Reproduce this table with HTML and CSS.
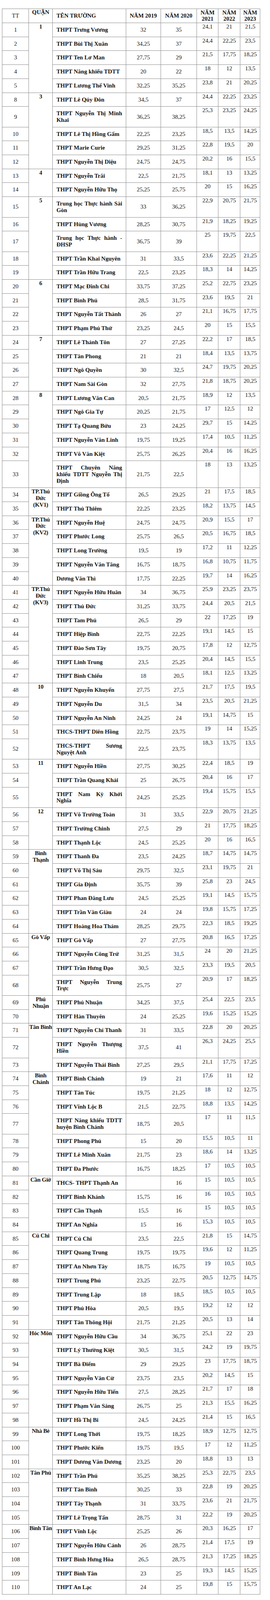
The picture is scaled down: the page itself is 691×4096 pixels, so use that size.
FILE: index.html
```html
<!DOCTYPE html>
<html lang="vi">
<head>
<meta charset="utf-8">
<title>Điểm chuẩn lớp 10</title>
<link rel="stylesheet" href="styles.css">
</head>
<body>
<table class="scores">
<colgroup>
<col class="c-tt"><col class="c-q"><col class="c-n"><col class="c-y1"><col class="c-y2"><col class="c-t1"><col class="c-t2"><col class="c-t3">
</colgroup>
<thead>
<tr><th class="h-tt">TT</th><th class="h-q">QUẬN</th><th class="h-n">TÊN TRƯỜNG</th><th class="h-y">NĂM 2019</th><th class="h-y">NĂM 2020</th><th class="h-y">NĂM<br>2021</th><th class="h-y">NĂM<br>2022</th><th class="h-y">NĂM<br>2023</th></tr>
</thead>
<tbody>
<tr><td class="tt">1</td><td class="q" rowspan="5">1</td><td class="n">THPT Trưng Vương</td><td class="y">32</td><td class="y">35</td><td class="t">24,1</td><td class="t">21</td><td class="t">21,5</td></tr>
<tr><td class="tt">2</td><td class="n">THPT Bùi Thị Xuân</td><td class="y">34,25</td><td class="y">37</td><td class="t">24,4</td><td class="t">22,25</td><td class="t">23,5</td></tr>
<tr><td class="tt">3</td><td class="n">THPT Ten Lơ Man</td><td class="y">27,75</td><td class="y">29</td><td class="t">21,5</td><td class="t">17,75</td><td class="t">18,25</td></tr>
<tr><td class="tt">4</td><td class="n">THPT Năng khiếu TDTT</td><td class="y">20</td><td class="y">22</td><td class="t">18</td><td class="t">12</td><td class="t">13,5</td></tr>
<tr><td class="tt">5</td><td class="n">THPT Lương Thế Vinh</td><td class="y">32,25</td><td class="y">35,25</td><td class="t">23,8</td><td class="t">21</td><td class="t">20,25</td></tr>
<tr><td class="tt">8</td><td class="q" rowspan="5">3</td><td class="n">THPT Lê Qúy Đôn</td><td class="y">34,5</td><td class="y">37</td><td class="t">24,4</td><td class="t">22,25</td><td class="t">23,25</td></tr>
<tr><td class="tt">9</td><td class="n">THPT Nguyễn Thị Minh Khai</td><td class="y">36,25</td><td class="y">38,25</td><td class="t">25,3</td><td class="t">23,25</td><td class="t">24,25</td></tr>
<tr><td class="tt">10</td><td class="n">THPT Lê Thị Hồng Gấm</td><td class="y">22,25</td><td class="y">23,25</td><td class="t">18,5</td><td class="t">13,5</td><td class="t">14,25</td></tr>
<tr><td class="tt">11</td><td class="n">THPT Marie Curie</td><td class="y">29,25</td><td class="y">31,25</td><td class="t">22,8</td><td class="t">19,5</td><td class="t">20</td></tr>
<tr><td class="tt">12</td><td class="n">THPT Nguyễn Thị Diệu</td><td class="y">24,75</td><td class="y">24,75</td><td class="t">20,2</td><td class="t">16</td><td class="t">15,5</td></tr>
<tr><td class="tt">13</td><td class="q" rowspan="2">4</td><td class="n">THPT Nguyễn Trãi</td><td class="y">22,5</td><td class="y">21,75</td><td class="t">18,1</td><td class="t">13</td><td class="t">13,25</td></tr>
<tr><td class="tt">14</td><td class="n">THPT Nguyễn Hữu Thọ</td><td class="y">25,25</td><td class="y">25,75</td><td class="t">20</td><td class="t">15</td><td class="t">16,25</td></tr>
<tr><td class="tt">15</td><td class="q" rowspan="5">5</td><td class="n">Trung học Thực hành Sài Gòn</td><td class="y">33</td><td class="y">36,25</td><td class="t">22,9</td><td class="t">20,75</td><td class="t">21,75</td></tr>
<tr><td class="tt">16</td><td class="n">THPT Hùng Vương</td><td class="y">28,25</td><td class="y">30,75</td><td class="t">21,9</td><td class="t">18,25</td><td class="t">19,25</td></tr>
<tr><td class="tt">17</td><td class="n">Trung học Thực hành - ĐHSP</td><td class="y">36,75</td><td class="y">39</td><td class="t">25</td><td class="t">19,75</td><td class="t">22,5</td></tr>
<tr><td class="tt">18</td><td class="n">THPT Trần Khai Nguyên</td><td class="y">31</td><td class="y">33,5</td><td class="t">23,6</td><td class="t">22,25</td><td class="t">21,25</td></tr>
<tr><td class="tt">19</td><td class="n">THPT Trần Hữu Trang</td><td class="y">22,5</td><td class="y">23,25</td><td class="t">18,3</td><td class="t">14</td><td class="t">14,25</td></tr>
<tr><td class="tt">20</td><td class="q" rowspan="4">6</td><td class="n">THPT Mạc Đĩnh Chi</td><td class="y">33,75</td><td class="y">37,25</td><td class="t">25,2</td><td class="t">22,75</td><td class="t">23,25</td></tr>
<tr><td class="tt">21</td><td class="n">THPT Bình Phú</td><td class="y">28,5</td><td class="y">31,75</td><td class="t">23,6</td><td class="t">19,5</td><td class="t">21</td></tr>
<tr><td class="tt">22</td><td class="n">THPT Nguyễn Tất Thành</td><td class="y">26</td><td class="y">27</td><td class="t">21,1</td><td class="t">16,75</td><td class="t">17,75</td></tr>
<tr><td class="tt">23</td><td class="n">THPT Phạm Phú Thứ</td><td class="y">23,25</td><td class="y">24,5</td><td class="t">20</td><td class="t">15</td><td class="t">15,5</td></tr>
<tr><td class="tt">24</td><td class="q" rowspan="4">7</td><td class="n">THPT Lê Thánh Tôn</td><td class="y">27</td><td class="y">27,25</td><td class="t">22,2</td><td class="t">17</td><td class="t">18,5</td></tr>
<tr><td class="tt">25</td><td class="n">THPT Tân Phong</td><td class="y">21</td><td class="y">21</td><td class="t">18,4</td><td class="t">13,5</td><td class="t">13,75</td></tr>
<tr><td class="tt">26</td><td class="n">THPT Ngô Quyền</td><td class="y">30</td><td class="y">32,5</td><td class="t">24,7</td><td class="t">19,75</td><td class="t">20,25</td></tr>
<tr><td class="tt">27</td><td class="n">THPT Nam Sài Gòn</td><td class="y">32</td><td class="y">27,75</td><td class="t">21,8</td><td class="t">18,75</td><td class="t">20,25</td></tr>
<tr><td class="tt">28</td><td class="q" rowspan="6">8</td><td class="n">THPT Lương Văn Can</td><td class="y">20,5</td><td class="y">21,75</td><td class="t">18,9</td><td class="t">12</td><td class="t">13,5</td></tr>
<tr><td class="tt">29</td><td class="n">THPT Ngô Gia Tự</td><td class="y">20,25</td><td class="y">21,75</td><td class="t">17</td><td class="t">12,5</td><td class="t">12</td></tr>
<tr><td class="tt">30</td><td class="n">THPT Tạ Quang Bửu</td><td class="y">23</td><td class="y">24,25</td><td class="t">29,7</td><td class="t">15</td><td class="t">14,25</td></tr>
<tr><td class="tt">31</td><td class="n">THPT Nguyễn Văn Linh</td><td class="y">19,75</td><td class="y">19,25</td><td class="t">17,4</td><td class="t">10,5</td><td class="t">11,25</td></tr>
<tr><td class="tt">32</td><td class="n">THPT Võ Văn Kiệt</td><td class="y">25,75</td><td class="y">26,25</td><td class="t">20,4</td><td class="t">16</td><td class="t">16,25</td></tr>
<tr><td class="tt">33</td><td class="n">THPT Chuyên Năng khiếu TDTT Nguyễn Thị Định</td><td class="y">21,75</td><td class="y">22,5</td><td class="t">18</td><td class="t">13</td><td class="t">13,25</td></tr>
<tr><td class="tt">34</td><td class="q" rowspan="2">TP.Thủ<br>Đức<br>(KV1)</td><td class="n">THPT Giồng Ông Tố</td><td class="y">26,5</td><td class="y">29,25</td><td class="t">21</td><td class="t">17,5</td><td class="t">18,5</td></tr>
<tr><td class="tt">35</td><td class="n">THPT Thủ Thiêm</td><td class="y">22,25</td><td class="y">23,25</td><td class="t">18,2</td><td class="t">13,75</td><td class="t">14,5</td></tr>
<tr><td class="tt">36</td><td class="q" rowspan="5">TP.Thủ<br>Đức<br>(KV2)</td><td class="n">THPT Nguyễn Huệ</td><td class="y">24,75</td><td class="y">24,75</td><td class="t">20,9</td><td class="t">15,5</td><td class="t">17</td></tr>
<tr><td class="tt">37</td><td class="n">THPT Phước Long</td><td class="y">25,75</td><td class="y">26,5</td><td class="t">20,5</td><td class="t">16,75</td><td class="t">18,5</td></tr>
<tr><td class="tt">38</td><td class="n">THPT Long Trường</td><td class="y">19,5</td><td class="y">19</td><td class="t">17,2</td><td class="t">11</td><td class="t">12,25</td></tr>
<tr><td class="tt">39</td><td class="n">THPT Nguyễn Văn Tăng</td><td class="y">16,75</td><td class="y">18,75</td><td class="t">16,8</td><td class="t">10,75</td><td class="t">11,75</td></tr>
<tr><td class="tt">40</td><td class="n">Dương Văn Thì</td><td class="y">17,75</td><td class="y">22,25</td><td class="t">19,7</td><td class="t">14</td><td class="t">16,25</td></tr>
<tr><td class="tt">41</td><td class="q" rowspan="7">TP.Thủ<br>Đức<br>(KV3)</td><td class="n">THPT Nguyễn Hữu Huân</td><td class="y">34</td><td class="y">36,75</td><td class="t">25,9</td><td class="t">23,25</td><td class="t">23,75</td></tr>
<tr><td class="tt">42</td><td class="n">THPT Thủ Đức</td><td class="y">31,25</td><td class="y">33,75</td><td class="t">24,4</td><td class="t">20,5</td><td class="t">21,5</td></tr>
<tr><td class="tt">43</td><td class="n">THPT Tam Phú</td><td class="y">26,5</td><td class="y">29</td><td class="t">22</td><td class="t">17,25</td><td class="t">19</td></tr>
<tr><td class="tt">44</td><td class="n">THPT Hiệp Bình</td><td class="y">22,75</td><td class="y">22,25</td><td class="t">19,1</td><td class="t">14,5</td><td class="t">15</td></tr>
<tr><td class="tt">45</td><td class="n">THPT Đào Sơn Tây</td><td class="y">19,75</td><td class="y">20,75</td><td class="t">17,8</td><td class="t">12</td><td class="t">12,75</td></tr>
<tr><td class="tt">46</td><td class="n">THPT Linh Trung</td><td class="y">23,5</td><td class="y">25,25</td><td class="t">20,4</td><td class="t">14,5</td><td class="t">15,5</td></tr>
<tr><td class="tt">47</td><td class="n">THPT Bình Chiểu</td><td class="y">18</td><td class="y">20,5</td><td class="t">18,1</td><td class="t">12,5</td><td class="t">13,25</td></tr>
<tr><td class="tt">48</td><td class="q" rowspan="5">10</td><td class="n">THPT Nguyễn Khuyến</td><td class="y">27,75</td><td class="y">27,5</td><td class="t">21,7</td><td class="t">17,5</td><td class="t">19,5</td></tr>
<tr><td class="tt">49</td><td class="n">THPT Nguyễn Du</td><td class="y">31,5</td><td class="y">34</td><td class="t">23,5</td><td class="t">20,5</td><td class="t">21,25</td></tr>
<tr><td class="tt">50</td><td class="n">THPT Nguyễn An Ninh</td><td class="y">24,25</td><td class="y">24</td><td class="t">19,1</td><td class="t">14,75</td><td class="t">15</td></tr>
<tr><td class="tt">51</td><td class="n">THCS-THPT Diên Hồng</td><td class="y">22,75</td><td class="y">23,75</td><td class="t">19</td><td class="t">14</td><td class="t">15,25</td></tr>
<tr><td class="tt">52</td><td class="n">THCS-THPT Sương Nguyệt Anh</td><td class="y">22,5</td><td class="y">23,75</td><td class="t">18,3</td><td class="t">13,75</td><td class="t">13,5</td></tr>
<tr><td class="tt">53</td><td class="q" rowspan="3">11</td><td class="n">THPT Nguyễn Hiền</td><td class="y">27,75</td><td class="y">30,25</td><td class="t">22,4</td><td class="t">18,5</td><td class="t">19</td></tr>
<tr><td class="tt">54</td><td class="n">THPT Trần Quang Khải</td><td class="y">25</td><td class="y">26,75</td><td class="t">20,4</td><td class="t">16</td><td class="t">17</td></tr>
<tr><td class="tt">55</td><td class="n">THPT Nam Kỳ Khởi Nghĩa</td><td class="y">24,25</td><td class="y">25,25</td><td class="t">19,4</td><td class="t">15,75</td><td class="t">15,5</td></tr>
<tr><td class="tt">56</td><td class="q" rowspan="3">12</td><td class="n">THPT Võ Trường Toản</td><td class="y">31</td><td class="y">33,5</td><td class="t">22,9</td><td class="t">20,75</td><td class="t">21,25</td></tr>
<tr><td class="tt">57</td><td class="n">THPT Trường Chinh</td><td class="y">27,5</td><td class="y">29</td><td class="t">21</td><td class="t">17,75</td><td class="t">18,25</td></tr>
<tr><td class="tt">58</td><td class="n">THPT Thạnh Lộc</td><td class="y">24,5</td><td class="y">25,25</td><td class="t">20</td><td class="t">16</td><td class="t">16,5</td></tr>
<tr><td class="tt">59</td><td class="q" rowspan="6">Bình<br>Thạnh</td><td class="n">THPT Thanh Đa</td><td class="y">23,5</td><td class="y">24,25</td><td class="t">18,7</td><td class="t">14,75</td><td class="t">14,75</td></tr>
<tr><td class="tt">60</td><td class="n">THPT Võ Thị Sáu</td><td class="y">29,75</td><td class="y">32,5</td><td class="t">23,1</td><td class="t">19,75</td><td class="t">21</td></tr>
<tr><td class="tt">61</td><td class="n">THPT Gia Định</td><td class="y">35,75</td><td class="y">39</td><td class="t">25,8</td><td class="t">23</td><td class="t">24,5</td></tr>
<tr><td class="tt">62</td><td class="n">THPT Phan Đăng Lưu</td><td class="y">24,5</td><td class="y">25,25</td><td class="t">19,1</td><td class="t">14,5</td><td class="t">15,75</td></tr>
<tr><td class="tt">63</td><td class="n">THPT Trần Văn Giàu</td><td class="y">24</td><td class="y">24</td><td class="t">19,8</td><td class="t">15,75</td><td class="t">17,25</td></tr>
<tr><td class="tt">64</td><td class="n">THPT Hoàng Hoa Thám</td><td class="y">28,25</td><td class="y">29,75</td><td class="t">22,3</td><td class="t">18,5</td><td class="t">19,25</td></tr>
<tr><td class="tt">65</td><td class="q" rowspan="4">Gò Vấp</td><td class="n">THPT Gò Vấp</td><td class="y">27</td><td class="y">27,75</td><td class="t">20,8</td><td class="t">16,5</td><td class="t">17,25</td></tr>
<tr><td class="tt">66</td><td class="n">THPT Nguyễn Công Trứ</td><td class="y">31,25</td><td class="y">31,5</td><td class="t">24</td><td class="t">20</td><td class="t">21,25</td></tr>
<tr><td class="tt">67</td><td class="n">THPT Trần Hưng Đạo</td><td class="y">30,5</td><td class="y">32,5</td><td class="t">23,3</td><td class="t">19,5</td><td class="t">20,5</td></tr>
<tr><td class="tt">68</td><td class="n">THPT Nguyễn Trung Trực</td><td class="y">25,75</td><td class="y">27</td><td class="t">20,9</td><td class="t">17</td><td class="t">18,25</td></tr>
<tr><td class="tt">69</td><td class="q" rowspan="2">Phú<br>Nhuận</td><td class="n">THPT Phú Nhuận</td><td class="y">34,25</td><td class="y">37,5</td><td class="t">25,4</td><td class="t">22,5</td><td class="t">23,5</td></tr>
<tr><td class="tt">70</td><td class="n">THPT Hàn Thuyên</td><td class="y">24</td><td class="y">25,25</td><td class="t">19,6</td><td class="t">15,25</td><td class="t">15,25</td></tr>
<tr><td class="tt">71</td><td class="q" rowspan="3">Tân Bình</td><td class="n">THPT Nguyễn Chí Thanh</td><td class="y">31</td><td class="y">33,5</td><td class="t">22,8</td><td class="t">20</td><td class="t">20,25</td></tr>
<tr><td class="tt">72</td><td class="n">THPT Nguyễn Thượng Hiền</td><td class="y">37,5</td><td class="y">41</td><td class="t">26,3</td><td class="t">24,25</td><td class="t">25,5</td></tr>
<tr><td class="tt">73</td><td class="n">THPT Nguyễn Thái Bình</td><td class="y">27,25</td><td class="y">29,5</td><td class="t">21,1</td><td class="t">17,75</td><td class="t">17,25</td></tr>
<tr><td class="tt">74</td><td class="q" rowspan="7">Bình<br>Chánh</td><td class="n">THPT Bình Chánh</td><td class="y">19</td><td class="y">21</td><td class="t">17,6</td><td class="t">11</td><td class="t">12</td></tr>
<tr><td class="tt">75</td><td class="n">THPT Tân Túc</td><td class="y">19,75</td><td class="y">21,25</td><td class="t">18</td><td class="t">12</td><td class="t">12,75</td></tr>
<tr><td class="tt">76</td><td class="n">THPT Vĩnh Lộc B</td><td class="y">21,5</td><td class="y">22,75</td><td class="t">18,8</td><td class="t">13,5</td><td class="t">14,25</td></tr>
<tr><td class="tt">77</td><td class="n">THPT Năng khiếu TDTT huyện Bình Chánh</td><td class="y">18,75</td><td class="y">20,5</td><td class="t">17</td><td class="t">11</td><td class="t">11,5</td></tr>
<tr><td class="tt">78</td><td class="n">THPT Phong Phú</td><td class="y">15</td><td class="y">20</td><td class="t">15,5</td><td class="t">10,5</td><td class="t">11</td></tr>
<tr><td class="tt">79</td><td class="n">THPT Lê Minh Xuân</td><td class="y">21,75</td><td class="y">23</td><td class="t">18,6</td><td class="t">14</td><td class="t">13,25</td></tr>
<tr><td class="tt">80</td><td class="n">THPT Đa Phước</td><td class="y">16,75</td><td class="y">18,25</td><td class="t">17</td><td class="t">10,5</td><td class="t">10,5</td></tr>
<tr><td class="tt">81</td><td class="q" rowspan="4">Cần Giờ</td><td class="n">THCS- THPT Thạnh An</td><td class="y"></td><td class="y">16</td><td class="t">15</td><td class="t">10,5</td><td class="t">10,5</td></tr>
<tr><td class="tt">82</td><td class="n">THPT Bình Khánh</td><td class="y">15,75</td><td class="y">16</td><td class="t">16</td><td class="t">10,5</td><td class="t">10,5</td></tr>
<tr><td class="tt">83</td><td class="n">THPT Cần Thạnh</td><td class="y">15,5</td><td class="y">16</td><td class="t">15</td><td class="t">10,5</td><td class="t">10,5</td></tr>
<tr><td class="tt">84</td><td class="n">THPT An Nghĩa</td><td class="y">15</td><td class="y">16</td><td class="t">15,3</td><td class="t">10,5</td><td class="t">10,5</td></tr>
<tr><td class="tt">85</td><td class="q" rowspan="7">Củ Chi</td><td class="n">THPT Củ Chi</td><td class="y">23,5</td><td class="y">22,5</td><td class="t">21,8</td><td class="t">15</td><td class="t">14,75</td></tr>
<tr><td class="tt">86</td><td class="n">THPT Quang Trung</td><td class="y">19,75</td><td class="y">19,75</td><td class="t">19,6</td><td class="t">12</td><td class="t">11,25</td></tr>
<tr><td class="tt">87</td><td class="n">THPT An Nhơn Tây</td><td class="y">18,75</td><td class="y">16,75</td><td class="t">19</td><td class="t">10,5</td><td class="t">10,5</td></tr>
<tr><td class="tt">88</td><td class="n">THPT Trung Phú</td><td class="y">23,25</td><td class="y">22,75</td><td class="t">20,5</td><td class="t">12,75</td><td class="t">14,75</td></tr>
<tr><td class="tt">89</td><td class="n">THPT Trung Lập</td><td class="y">18</td><td class="y">18,5</td><td class="t">18,5</td><td class="t">10,5</td><td class="t">10,5</td></tr>
<tr><td class="tt">90</td><td class="n">THPT Phú Hòa</td><td class="y">20,5</td><td class="y">19,5</td><td class="t">19,2</td><td class="t">12</td><td class="t">12</td></tr>
<tr><td class="tt">91</td><td class="n">THPT Tân Thông Hội</td><td class="y">21,75</td><td class="y">21,25</td><td class="t">20,5</td><td class="t">13</td><td class="t">14</td></tr>
<tr><td class="tt">92</td><td class="q" rowspan="7">Hóc Môn</td><td class="n">THPT Nguyễn Hữu Cầu</td><td class="y">34</td><td class="y">36,75</td><td class="t">25,1</td><td class="t">22</td><td class="t">23</td></tr>
<tr><td class="tt">93</td><td class="n">THPT Lý Thường Kiệt</td><td class="y">30,5</td><td class="y">31,5</td><td class="t">24,2</td><td class="t">19</td><td class="t">19,75</td></tr>
<tr><td class="tt">94</td><td class="n">THPT Bà Điểm</td><td class="y">29</td><td class="y">29,25</td><td class="t">23</td><td class="t">17,75</td><td class="t">18,75</td></tr>
<tr><td class="tt">95</td><td class="n">THPT Nguyễn Văn Cừ</td><td class="y">23,75</td><td class="y">23,5</td><td class="t">20,2</td><td class="t">14,5</td><td class="t">15</td></tr>
<tr><td class="tt">96</td><td class="n">THPT Nguyễn Hữu Tiến</td><td class="y">27,5</td><td class="y">28,25</td><td class="t">21,7</td><td class="t">17</td><td class="t">18</td></tr>
<tr><td class="tt">97</td><td class="n">THPT Phạm Văn Sáng</td><td class="y">26,75</td><td class="y">25</td><td class="t">21,3</td><td class="t">15,5</td><td class="t">16,25</td></tr>
<tr><td class="tt">98</td><td class="n">THPT Hồ Thị Bi</td><td class="y">24,5</td><td class="y">24,25</td><td class="t">21,4</td><td class="t">15</td><td class="t">16,5</td></tr>
<tr><td class="tt">99</td><td class="q" rowspan="3">Nhà Bè</td><td class="n">THPT Long Thới</td><td class="y">19,75</td><td class="y">18,25</td><td class="t">18,9</td><td class="t">12,75</td><td class="t">12,75</td></tr>
<tr><td class="tt">100</td><td class="n">THPT Phước Kiển</td><td class="y">19,75</td><td class="y">19,5</td><td class="t">17</td><td class="t">12</td><td class="t">11,25</td></tr>
<tr><td class="tt">101</td><td class="n">THPT Dương Văn Dương</td><td class="y">23,25</td><td class="y">20</td><td class="t">18,8</td><td class="t">13</td><td class="t">13</td></tr>
<tr><td class="tt">102</td><td class="q" rowspan="4">Tân Phú</td><td class="n">THPT Trần Phú</td><td class="y">35,25</td><td class="y">38,25</td><td class="t">25,3</td><td class="t">22,75</td><td class="t">23,5</td></tr>
<tr><td class="tt">103</td><td class="n">THPT Tân Bình</td><td class="y">30,25</td><td class="y">33</td><td class="t">22,8</td><td class="t">19</td><td class="t">20,25</td></tr>
<tr><td class="tt">104</td><td class="n">THPT Tây Thạnh</td><td class="y">31</td><td class="y">33,75</td><td class="t">23,6</td><td class="t">21</td><td class="t">21,75</td></tr>
<tr><td class="tt">105</td><td class="n">THPT Lê Trọng Tấn</td><td class="y">28,75</td><td class="y">31</td><td class="t">22,2</td><td class="t">19</td><td class="t">20,25</td></tr>
<tr><td class="tt">106</td><td class="q" rowspan="5">Bình Tân</td><td class="n">THPT Vĩnh Lộc</td><td class="y">25,25</td><td class="y">26</td><td class="t">20,3</td><td class="t">16,25</td><td class="t">17</td></tr>
<tr><td class="tt">107</td><td class="n">THPT Nguyễn Hữu Cảnh</td><td class="y">26</td><td class="y">28,75</td><td class="t">21,4</td><td class="t">17,5</td><td class="t">19</td></tr>
<tr><td class="tt">108</td><td class="n">THPT Bình Hưng Hòa</td><td class="y">26,5</td><td class="y">28,75</td><td class="t">21,3</td><td class="t">17,25</td><td class="t">18,25</td></tr>
<tr><td class="tt">109</td><td class="n">THPT Bình Tân</td><td class="y">23</td><td class="y">25</td><td class="t">19,3</td><td class="t">14,5</td><td class="t">15,25</td></tr>
<tr><td class="tt">110</td><td class="n">THPT An Lạc</td><td class="y">24</td><td class="y">25</td><td class="t">19,8</td><td class="t">15</td><td class="t">15,75</td></tr>
</tbody>
</table>
</body>
</html>
```

FILE: styles.css
```css
html, body {
  margin: 0;
  padding: 0;
  background: #ffffff;
}

body {
  font-family: "Liberation Serif", "Times New Roman", serif;
  font-size: 15px;
  line-height: 16.7px;
  color: #141414;
}

.scores {
  margin: 21.6px 0 0 5.2px;
  width: 660.2px;
  border-collapse: collapse;
  table-layout: fixed;
}

.c-tt { width: 68.2px; }
.c-q  { width: 60.4px; }
.c-n  { width: 188.1px; }
.c-y1 { width: 88.9px; }
.c-y2 { width: 92.3px; }
.c-t1 { width: 55.2px; }
.c-t2 { width: 56.2px; }
.c-t3 { width: 50.9px; }

.scores th,
.scores td {
  border: 1px solid #8c8c8c;
  padding: 0;
  font-size: 15px;
  line-height: 16.7px;
}

/* header */
.scores th {
  padding: 1px 0;
  font-weight: bold;
  text-align: center;
  vertical-align: middle;
}

.scores th.h-tt {
  font-weight: normal;
}

.scores th.h-q {
  vertical-align: top;
  padding-top: 0;
}

.scores th.h-n {
  text-align: left;
  padding-left: 9.7px;
}

/* body cells */
.scores td.tt {
  text-align: center;
  vertical-align: middle;
}

.scores td.q {
  text-align: center;
  vertical-align: top;
  font-weight: bold;
  padding-top: 1px;
  white-space: nowrap;
  letter-spacing: -0.3px;
}

.scores td.n {
  font-weight: bold;
  text-align: justify;
  vertical-align: middle;
  padding: 9px 9.3px 9px 9.7px;
}

.scores td.y {
  text-align: center;
  vertical-align: middle;
}

.scores td.t {
  text-align: center;
  vertical-align: top;
  padding-top: 1px;
}
```
